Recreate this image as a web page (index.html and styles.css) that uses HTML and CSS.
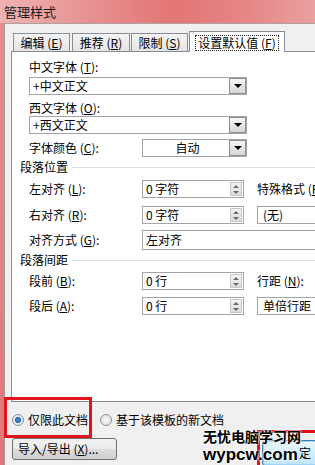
FILE: index.html
```html
<!DOCTYPE html>
<html lang="zh-CN">
<head>
<meta charset="utf-8">
<title>管理样式</title>
<link rel="stylesheet" href="styles.css">
</head>
<body>
<div class="window">
  <div class="titlebar">管理样式</div>
  <div class="frame">
    <div class="client">
      <div class="tabs">
        <div class="tab t1">编辑 (<u>E</u>)</div>
        <div class="tab t2">推荐 (<u>R</u>)</div>
        <div class="tab t3">限制 (<u>S</u>)</div>
        <div class="tab active"><span class="focus">设置默认值 (<u>F</u>)</span></div>
      </div>

      <div class="panel">
        <div class="label l1">中文字体 (<u>T</u>):</div>
        <div class="combo wide c1"><span class="val">+中文正文</span><span class="drop"></span></div>
        <div class="label l2">西文字体 (<u>O</u>):</div>
        <div class="combo wide"><span class="val">+西文正文</span><span class="drop"></span></div>

        <div class="row r3">
          <div class="cap">字体颜色 (<u>C</u>):</div>
          <div class="combo short"><span class="val center">自动</span><span class="drop"></span></div>
        </div>

        <div class="group g1"><span>段落位置</span><i></i></div>

        <div class="row r4">
          <div class="cap">左对齐 (<u>L</u>):</div>
          <div class="spin"><span class="val">0 字符</span><span class="arrows"><b class="up"></b><b class="down"></b></span></div>
          <div class="side">特殊格式 (<u>P</u>):</div>
        </div>
        <div class="row r5">
          <div class="cap">右对齐 (<u>R</u>):</div>
          <div class="spin"><span class="val">0 字符</span><span class="arrows"><b class="up"></b><b class="down"></b></span></div>
          <div class="field side">(无)</div>
        </div>
        <div class="row r6">
          <div class="cap">对齐方式 (<u>G</u>):</div>
          <div class="field long">左对齐</div>
        </div>

        <div class="group g2"><span>段落间距</span><i></i></div>

        <div class="row r7">
          <div class="cap">段前 (<u>B</u>):</div>
          <div class="spin"><span class="val">0 行</span><span class="arrows"><b class="up"></b><b class="down"></b></span></div>
          <div class="side">行距 (<u>N</u>):</div>
        </div>
        <div class="row r8">
          <div class="cap">段后 (<u>A</u>):</div>
          <div class="spin"><span class="val">0 行</span><span class="arrows"><b class="up"></b><b class="down"></b></span></div>
          <div class="field side">单倍行距</div>
        </div>
      </div>

      <div class="scope">
        <span class="radio on"></span><span class="opt">仅限此文档</span>
        <span class="radio"></span><span class="opt">基于该模板的新文档</span>
      </div>
      <div class="footer">
        <div class="button">导入/导出 (<u>X</u>)...</div>
      </div>
    </div>
  </div>

  <!-- annotations drawn over the dialog -->
  <div class="mark"></div>
  <div class="okmark"></div>
  <div class="okbtn"><span>定</span></div>
  <div class="watermark">
    <div class="wm1">无忧电脑学习网</div>
    <div class="wm2">wypcw.com</div>
  </div>
</div>
</body>
</html>
```

FILE: styles.css
```css
* {
  margin: 0;
  padding: 0;
  box-sizing: border-box;
}
body {
  width: 315px;
  height: 465px;
  overflow: hidden;
  font-family: "Noto Sans CJK SC", "Liberation Sans", sans-serif;
  font-size: 12px;
  line-height: 14px;
  color: #000;
  background: #f0f0f0;
}
u {
  text-decoration: underline;
}

.window {
  position: relative;
  width: 315px;
  height: 465px;
  overflow: hidden;
}
.titlebar {
  height: 23px;
  padding: 4px 0 0 4px;
  font-size: 13px;
  line-height: 16px;
  color: #1a1a1a;
  background: linear-gradient(to right, #eeb3b3 0%, #e79595 25%, #e27575 55%, #e68888 80%, #eaa0a0 100%);
}
.frame {
  height: 442px;
  padding-left: 4px;
  background: linear-gradient(#e48c8c, #dd7878);
}
.client {
  height: 100%;
  background: #f0f0f0;
  border-left: 1px solid #a99a9a;
  border-top: 1px solid #b49e9e;
  padding-left: 6px;
}

/* tabs */
.tabs {
  display: flex;
  align-items: flex-end;
  height: 27px;
}
.tab {
  flex-shrink: 0;
  height: 18px;
  border: 1px solid #898c95;
  border-bottom: none;
  background: linear-gradient(#f4f4f4, #e4e4e4);
  text-align: center;
  line-height: 17px;
  white-space: nowrap;
}
.t1 { margin-left: 2px; width: 57px; }
.t2 { margin-left: 2px; width: 58px; }
.t3 { margin-left: 1px; width: 57px; }
.tab.active {
  position: relative;
  z-index: 1;
  margin-left: 1px;
  width: 96px;
  height: 21px;
  margin-bottom: -1px;
  background: #fff;
  padding-top: 2px;
}
.focus {
  display: inline-block;
  border: 1px dotted #222;
  padding: 0 2px;
  line-height: 14px;
}

/* panel */
.panel {
  height: 351px;
  border: 1px solid #898c95;
  border-right: none;
  background: #fff;
  padding-left: 17px;
}
.label {
  height: 16px;
  line-height: 16px;
}
.l1 { margin-top: 7px; }
.l2 { margin-top: 5px; }
.c1 { margin-top: 2px; }

.combo {
  display: flex;
  align-items: center;
  height: 18px;
  border: 1px solid #a4a4a4;
  background: #fff;
}
.combo.wide { width: 218px; }
.combo.short { width: 105px; }
.val {
  flex: 1;
  padding-left: 3px;
  white-space: nowrap;
}
.val.center {
  text-align: center;
}
.drop {
  position: relative;
  flex-shrink: 0;
  width: 17px;
  height: 16px;
  border: 1px solid #8e8e8e;
  background: linear-gradient(#f6f6f6, #d6d6d6);
}
.drop::after {
  content: "";
  position: absolute;
  left: 4px;
  top: 5px;
  border-left: 4px solid transparent;
  border-right: 4px solid transparent;
  border-top: 4px solid #000;
}

.row {
  display: flex;
  align-items: center;
  height: 18px;
}
.row > * {
  flex-shrink: 0;
}
.cap {
  width: 113px;
  white-space: nowrap;
}
.r3 { margin-top: 5px; }
.r4 { margin-top: 6px; }
.r5 { margin-top: 8px; }
.r6 { margin-top: 6px; height: 20px; }
.r7 { margin-top: 5px; }
.r8 { margin-top: 7px; }

.group {
  display: flex;
  align-items: center;
  height: 14px;
  margin-left: -9px;
}
.group span {
  white-space: nowrap;
}
.group i {
  flex: 1;
  margin-left: 4px;
  border-top: 1px solid #d5dfe5;
}
.g1 { margin-top: 3px; }
.g2 { margin-top: 3px; }

.spin {
  display: flex;
  align-items: center;
  width: 102px;
  height: 18px;
  border: 1px solid #a4a4a4;
  background: #fff;
}
.arrows {
  display: flex;
  flex-direction: column;
  justify-content: space-around;
  align-items: center;
  width: 12px;
  height: 14px;
  margin-right: 1px;
  border: 1px solid #c6c6c6;
  background: linear-gradient(#f3f3f3, #dcdcdc);
}
.arrows b {
  display: block;
  border-left: 3px solid transparent;
  border-right: 3px solid transparent;
}
.arrows .up { border-bottom: 3px solid #6a6a6a; }
.arrows .down { border-top: 3px solid #6a6a6a; }

.side {
  margin-left: 13px;
  white-space: nowrap;
}
.field {
  height: 18px;
  line-height: 16px;
  border: 1px solid #a4a4a4;
  background: #fff;
  padding-left: 5px;
  white-space: nowrap;
}
.field.side {
  width: 80px;
}
.field.long {
  width: 180px;
  height: 20px;
  line-height: 18px;
  padding-left: 3px;
}

/* bottom of the dialog */
.scope {
  display: flex;
  align-items: center;
  height: 14px;
  margin-top: 11px;
  padding-left: 1px;
}
.radio {
  flex-shrink: 0;
  width: 12px;
  height: 12px;
  border: 1px solid #8f8f8f;
  border-radius: 50%;
  background: radial-gradient(circle, #f6f6f6, #dedede);
}
.radio.on {
  background: radial-gradient(circle, #5aa0de 0, #1e5fae 2.5px, #dfe7ef 3.5px, #eeeeee 100%);
}
.opt {
  margin-left: 4px;
  margin-right: 12px;
  white-space: nowrap;
}
.footer {
  margin-top: 11px;
  padding-left: 1px;
}
.button {
  width: 105px;
  height: 22px;
  border: 1px solid #707070;
  border-radius: 3px;
  background: linear-gradient(#f2f2f2 0%, #ebebeb 50%, #dddddd 51%, #cfcfcf 100%);
  line-height: 20px;
  padding-left: 5px;
  white-space: nowrap;
}

/* annotations */
.mark {
  position: absolute;
  left: 4px;
  top: 397px;
  width: 88px;
  height: 41px;
  border: 3px solid #e0141c;
}
.okmark {
  position: absolute;
  left: 257px;
  top: 430px;
  width: 80px;
  height: 50px;
  border: 3px solid #e0141c;
}
.okbtn {
  position: absolute;
  left: 262px;
  top: 440px;
  width: 70px;
  height: 26px;
  border: 1px solid #3c7fb1;
  border-radius: 3px;
  background: linear-gradient(#eaf6fd, #bee6fd);
  box-shadow: inset 0 0 0 1px #9fd3f5;
  padding-left: 36px;
  padding-top: 5px;
}
.okbtn span {
  display: block;
  width: 14px;
  line-height: 14px;
}
.watermark {
  position: absolute;
  left: 203px;
  top: 429px;
  width: 96px;
  text-shadow: 0 0 2px #fff, 0 0 2px #fff, 0 0 2px #fff;
}
.wm1 {
  height: 15px;
  font-size: 14px;
  line-height: 15px;
  font-weight: bold;
  white-space: nowrap;
}
.wm2 {
  margin-top: 3px;
  font-family: "Liberation Sans", sans-serif;
  font-size: 17px;
  line-height: 15px;
  font-weight: bold;
  white-space: nowrap;
}
```
